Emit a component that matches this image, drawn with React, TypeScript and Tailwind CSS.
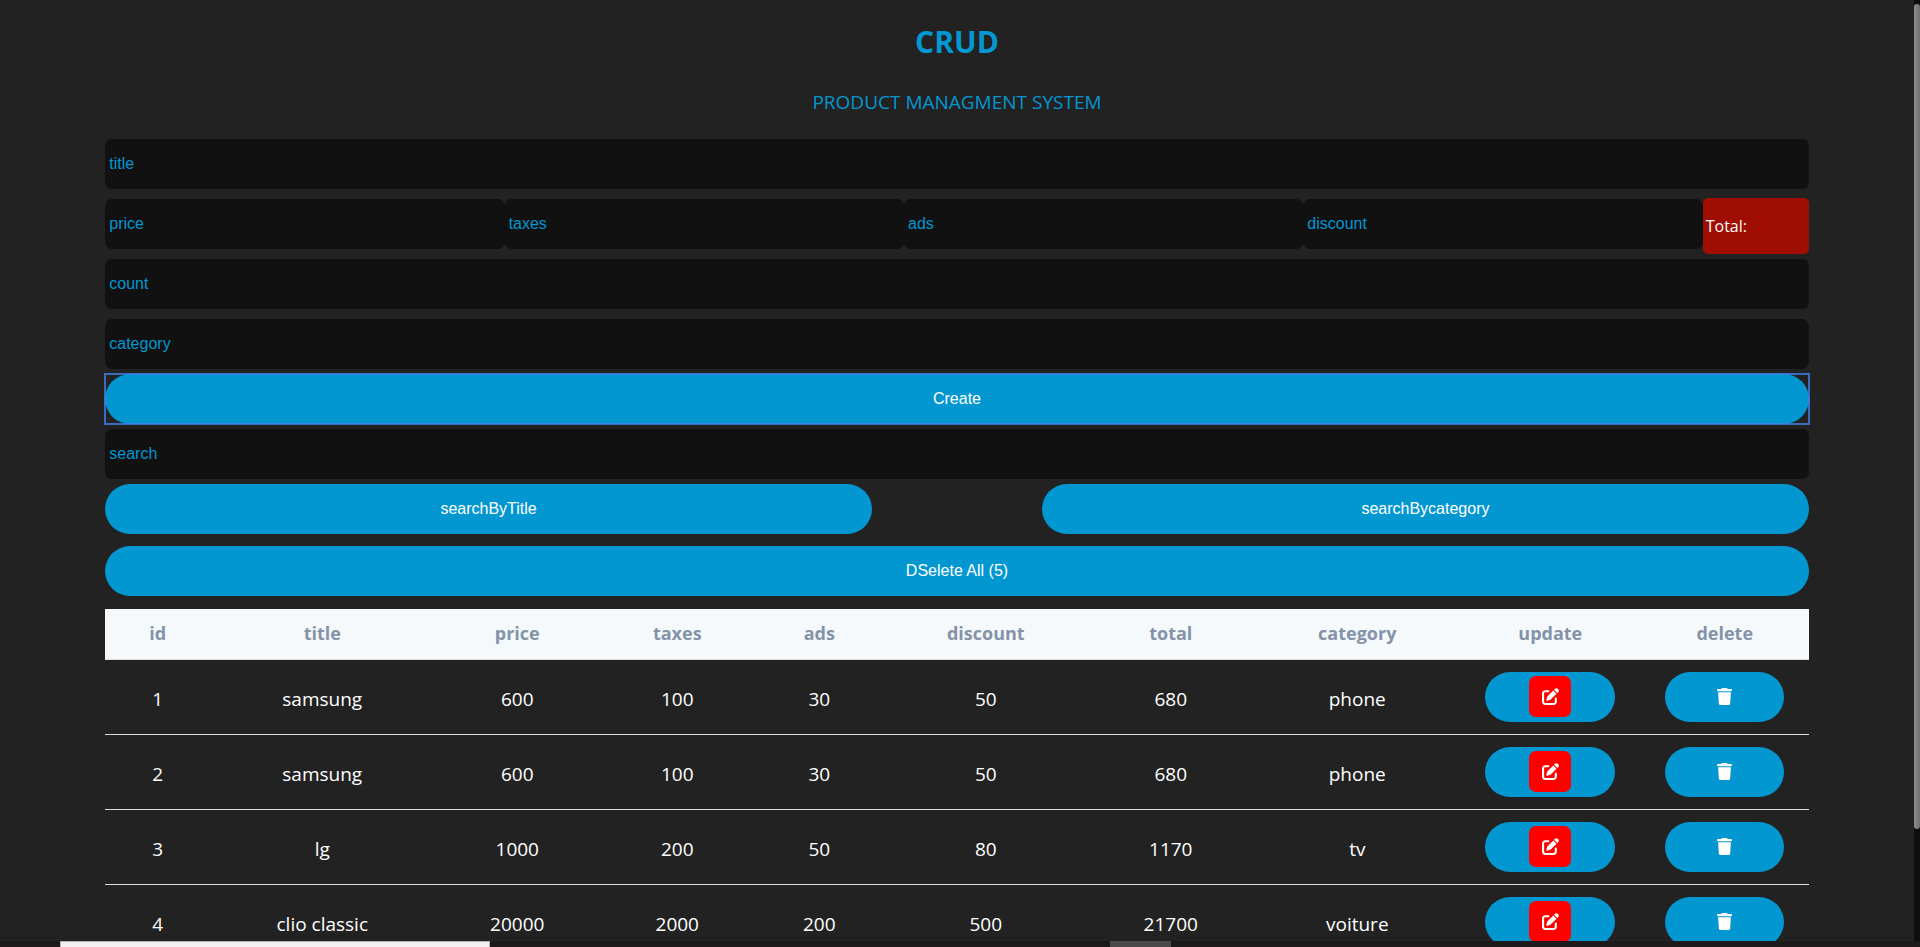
import React from "react";
import { FaTrash, FaPenToSquare } from "react-icons/fa6";

const inputClass =
  "h-[50px] w-full min-w-0 rounded-[7px] bg-[#111111] px-1 text-base text-[#0397d1] placeholder:text-[#0397d1] outline-none";
const buttonClass =
  "h-[50px] w-full rounded-full bg-[#0397d1] text-center text-base text-white";

const columns = [
  { name: "id", width: "w-[105px]" },
  { name: "title", width: "w-[224px]" },
  { name: "price", width: "w-[166px]" },
  { name: "taxes", width: "w-[154px]" },
  { name: "ads", width: "w-[130px]" },
  { name: "discount", width: "w-[203px]" },
  { name: "total", width: "w-[167px]" },
  { name: "category", width: "w-[206px]" },
  { name: "update", width: "w-[180px]" },
  { name: "delete", width: "w-[169px]" },
];

const products = [
  ["1", "samsung", "600", "100", "30", "50", "680", "phone"],
  ["2", "samsung", "600", "100", "30", "50", "680", "phone"],
  ["3", "lg", "1000", "200", "50", "80", "1170", "tv"],
  ["4", "clio classic", "20000", "2000", "200", "500", "21700", "voiture"],
];

function Field({ name }: { name: string }) {
  return <input className={inputClass} type="text" placeholder={name} aria-label={name} />;
}

export default function App() {
  return (
    <div className="flex h-screen flex-col overflow-hidden bg-[#222222] font-['Open_Sans','Noto_Sans',sans-serif] text-white">
      <div className="flex min-h-0 flex-1">
        <main className="min-w-0 flex-1 overflow-hidden">
          <div className="mx-auto w-[89%]">
            <header className="pt-[22px] text-center uppercase text-[#0397d1]">
              <h1 className="text-[30px] leading-10 font-bold">Crud</h1>
              <h2 className="mt-[26px] text-[19px] leading-7">product managment system</h2>
            </header>

            <form
              className="mt-[23px] font-['Liberation_Sans',Arial,sans-serif]"
              onSubmit={(event) => event.preventDefault()}
            >
              <Field name="title" />
              <div className="mt-[5px] flex items-end">
                <div className="my-[5px] flex min-w-0 flex-1">
                  <Field name="price" />
                  <Field name="taxes" />
                  <Field name="ads" />
                  <Field name="discount" />
                </div>
                <div className="flex h-14 w-[106px] items-center rounded-[5px] bg-[#a00d02] px-[3px] font-['Open_Sans','Noto_Sans',sans-serif] text-base">
                  Total:
                </div>
              </div>
              <div className="mt-[5px] flex flex-col gap-[10px]">
                <Field name="count" />
                <Field name="category" />
              </div>
              <div className="mt-[5px] flex flex-col gap-[5px]">
                <div className="outline-2 -outline-offset-1 outline-[#4287f5]/75">
                  <button type="submit" className={buttonClass + " block"}>
                    Create
                  </button>
                </div>
                <Field name="search" />
                <div className="flex justify-between">
                  <div className="w-[45%]">
                    <button type="button" className={buttonClass}>searchByTitle</button>
                  </div>
                  <div className="w-[45%]">
                    <button type="button" className={buttonClass}>searchBycategory</button>
                  </div>
                </div>
              </div>
              <button type="button" className={buttonClass + " mt-3 block"}>
                DSelete All (5)
              </button>
            </form>

            <table className="mt-[13px] w-full table-fixed border-collapse text-center text-[19px]">
              <thead>
                <tr className="h-[50px] border-b border-[#dddddd] bg-[#f5f9fc] text-[18px] text-[#8493a8]">
                  {columns.map((column) => (
                    <th key={column.name} className={column.width + " font-bold"}>
                      {column.name}
                    </th>
                  ))}
                </tr>
              </thead>
              <tbody>
                {products.map((product) => (
                  <tr key={product[0]} className="h-[75px] border-b border-[#dddddd]">
                    {product.map((value, index) => (
                      <td key={index} className="pt-[5px]">{value}</td>
                    ))}
                    <td className="px-[25px]">
                      <button type="button" aria-label="update" className={buttonClass + " flex items-center justify-center"}>
                        <span className="flex h-[41px] w-[42px] items-center justify-center rounded-[7px] bg-[#ff0000]">
                          <FaPenToSquare size={17} />
                        </span>
                      </button>
                    </td>
                    <td className="px-[25px]">
                      <button type="button" aria-label="delete" className={buttonClass + " flex items-center justify-center"}>
                        <FaTrash size={17} />
                      </button>
                    </td>
                  </tr>
                ))}
              </tbody>
            </table>
          </div>
        </main>
        <div className="w-[6px] bg-[#0e0e0e] pt-1">
          <div className="h-[88%] rounded-full bg-linear-to-r from-[#8c8c8c] to-[#707070]" />
        </div>
      </div>
      <div className="flex h-[6px] bg-[#1b1919]">
        <div className="ml-[60px] w-[430px] border border-b-0 border-[#b5b3b3] bg-[#f2f0f0]" />
        <div className="ml-[620px] w-[61px] bg-[#4b4a4a]" />
      </div>
    </div>
  );
}
